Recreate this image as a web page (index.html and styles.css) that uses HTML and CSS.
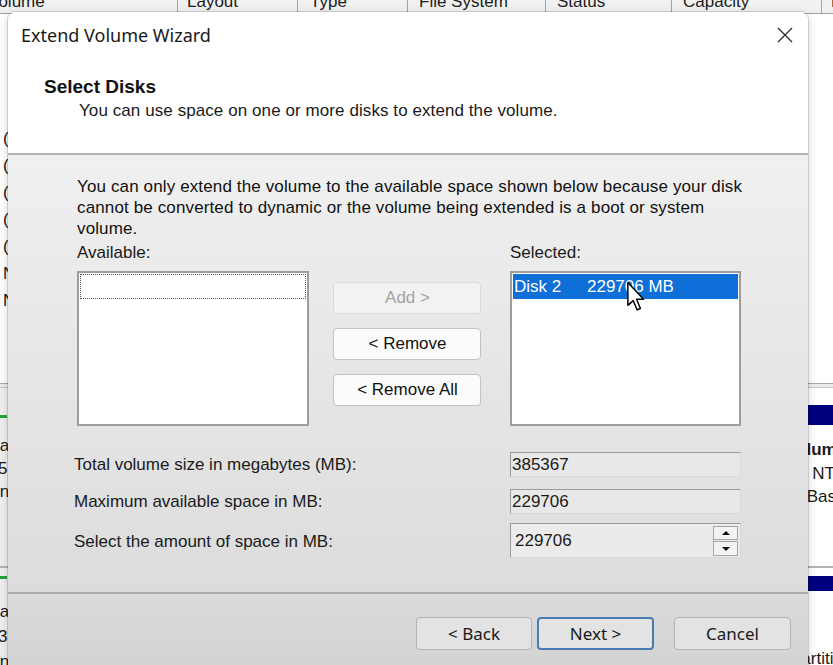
FILE: index.html
```html
<!DOCTYPE html>
<html>
<head>
<meta charset="utf-8">
<title>Extend Volume Wizard</title>
<link rel="stylesheet" href="styles.css">
</head>
<body>
<div class="screen">
  <div class="mmc">
    <div class="colhead">
      <div class="col c1"><span>Volume</span></div>
      <div class="col c2"><span>Layout</span></div>
      <div class="col c3"><span>Type</span></div>
      <div class="col c4"><span>File System</span></div>
      <div class="col c5"><span>Status</span></div>
      <div class="col c6"><span>Capacity</span></div>
      <div class="col c7"><span>Free</span></div>
    </div>
    <div class="vollist">
      <div class="vrow"></div>
      <div class="vrow"></div>
      <div class="vrow"></div>
      <div class="vrow"></div>
      <div class="vrow">(C:)</div>
      <div class="vrow">(D:)</div>
      <div class="vrow">(E:)</div>
      <div class="vrow">(F:)</div>
      <div class="vrow">(G:)</div>
      <div class="vrow">New</div>
      <div class="vrow">New</div>
    </div>
    <div class="splitter"></div>
    <div class="disk d1">
      <div class="dlabel">
        <div class="legend"></div>
        <div class="dl">Basic</div>
        <div class="dl">55.88</div>
        <div class="dl dl-o">Online</div>
      </div>
      <div class="part">
        <div class="pbar"></div>
        <div class="pt pt1">Volume</div>
        <div class="pt pt2">GB NTFS</div>
        <div class="pt pt3">(Basic</div>
      </div>
    </div>
    <div class="disk d2">
      <div class="dlabel">
        <div class="legend"></div>
        <div class="dl">Basic</div>
        <div class="dl">238.4</div>
        <div class="dl dl-o">Online</div>
      </div>
      <div class="part">
        <div class="pbar"></div>
        <div class="pt pt4">Partition</div>
      </div>
    </div>
  </div>

  <div class="dialog">
    <div class="dhead">
      <div class="titlebar">
        <span class="title">Extend Volume Wizard</span>
        <svg class="close" viewBox="0 0 16 16"><path d="M1 1L15 15M15 1L1 15"/></svg>
      </div>
      <div class="wtitle">Select Disks</div>
      <div class="wsub">You can use space on one or more disks to extend the volume.</div>
    </div>
    <div class="hsep"></div>
    <div class="dbody">
      <p class="info">You can only extend the volume to the available space shown below because your disk<br>cannot be converted to dynamic or the volume being extended is a boot or system<br>volume.</p>
      <div class="picker">
        <div class="pcol">
          <div class="plabel">Available:</div>
          <div class="listbox"><div class="focusrow"></div></div>
        </div>
        <div class="pbtns">
          <button class="btn" disabled>Add &gt;</button>
          <button class="btn">&lt; Remove</button>
          <button class="btn">&lt; Remove All</button>
        </div>
        <div class="pcol sel">
          <div class="plabel">Selected:</div>
          <div class="listbox"><div class="selrow"><span class="dname">Disk 2</span><span>229706 MB</span></div></div>
        </div>
      </div>
      <div class="sizes">
        <div class="slabel">Total volume size in megabytes (MB):</div>
        <div class="field ro">385367</div>
        <div class="slabel">Maximum available space in MB:</div>
        <div class="field ro">229706</div>
        <div class="slabel tall">Select the amount of space in MB:</div>
        <div class="field spin">
          <span class="spinval">229706</span>
          <div class="spinbtns">
            <div class="sb"><span class="tri up"></span></div>
            <div class="sb"><span class="tri dn"></span></div>
          </div>
        </div>
      </div>
    </div>
    <div class="fsep"></div>
    <div class="footer">
      <button class="fbtn back">&lt; Back</button>
      <button class="fbtn primary">Next &gt;</button>
      <button class="fbtn">Cancel</button>
    </div>
  </div>

  <svg class="cursor" viewBox="0 0 13 21" width="20" height="31"><path d="M1 1 L1 16.5 L4.6 13.3 L7.3 19.6 L9.5 18.6 L6.9 12.4 L11.6 12.4 Z" fill="#fff" stroke="#000" stroke-width="1" stroke-linejoin="round"/></svg>
</div>
</body>
</html>
```

FILE: styles.css
```css
* { box-sizing: border-box; }
html, body { margin: 0; padding: 0; }
body {
  width: 833px;
  height: 665px;
  overflow: hidden;
  background: #fff;
  font-family: "Liberation Sans", Arial, sans-serif;
}
.screen { position: relative; width: 833px; height: 665px; overflow: hidden; }

/* ---------- background Disk Management window ---------- */
.mmc {
  width: 833px;
  height: 665px;
  display: flex;
  flex-direction: column;
  background: #fff;
  color: #1b1b1b;
  font-size: 17px;
}
.colhead {
  flex: none;
  display: flex;
  height: 14px;
  overflow: hidden;
  background: #f1f1f1;
  border-bottom: 1px solid #a0a0a0;
}
.col {
  flex: none;
  height: 100%;
  border-right: 1px solid #a3a3a3;
  padding-left: 9px;
  white-space: nowrap;
  overflow: hidden;
}
.col span { display: block; margin-top: -8px; line-height: 20px; }
.c1 { width: 178px; padding-left: 0; }
.c1 span { margin-left: -12px; }
.c2 { width: 120px; }
.c3 { width: 110px; padding-left: 12px; }
.c4 { width: 138px; padding-left: 11px; }
.c5 { width: 126px; padding-left: 11px; }
.c6 { width: 150px; padding-left: 11px; }
.c7 { flex: 1; border-right: 0; }

.vollist { flex: none; height: 369px; padding-top: 3px; overflow: hidden; }
.vrow { height: 27px; line-height: 27px; padding-left: 3px; white-space: nowrap; color: #151515; }

.splitter {
  flex: none;
  height: 5px;
  border-top: 1px solid #a8a8a8;
  border-bottom: 1px solid #c6c6c6;
  background: #ececec;
}
.disk { flex: none; display: flex; background: #fff; }
.d1 { height: 178px; }
.d2 { flex: 1; border-top: 2px solid #b4b4b4; }
.dlabel { flex: none; width: 60px; background: #efefef; overflow: hidden; white-space: nowrap; }
.legend { width: 7px; height: 3px; background: #23a33c; }
.dl { text-indent: -11.5px; }
.dl-o { text-indent: -13.5px; }
.d1 .dlabel { padding-top: 27px; }
.d1 .legend { margin-bottom: 16px; }
.d1 .dl { line-height: 23px; }
.d2 .dlabel { padding-top: 8px; }
.d2 .legend { margin-bottom: 20px; }
.d2 .dl { line-height: 25px; }

.part { flex: 1; overflow: hidden; white-space: nowrap; }
.pbar { background: #00007f; }
.d1 .pbar { margin-top: 17px; height: 20px; margin-bottom: 13px; }
.d2 .pbar { margin-top: 8px; height: 15px; margin-bottom: 56px; }
.pt { line-height: 23.5px; }
.pt1 { padding-left: 726px; font-weight: bold; }
.pt2 { padding-left: 723px; }
.pt3 { padding-left: 741px; }
.pt4 { padding-left: 730px; }

/* ---------- dialog ---------- */
.dialog {
  position: absolute;
  left: 8px;
  top: 12px;
  width: 800px;
  height: 660px;
  display: flex;
  flex-direction: column;
  border-radius: 8px 8px 0 0;
  overflow: hidden;
  background: #f0f0f0;
  box-shadow: 0 0 0 1px rgba(0,0,0,0.13), 0 2px 10px rgba(0,0,0,0.18);
  color: #111;
}
.dhead { flex: none; height: 141px; background: #fff; }
.titlebar {
  height: 46px;
  display: flex;
  align-items: center;
  justify-content: space-between;
  padding: 0 15px 0 13px;
}
.title { font-family: "Noto Sans", sans-serif; font-size: 18px; color: #1a1a1a; }
.close { width: 16px; height: 16px; stroke: #2b2b2b; stroke-width: 1.3; fill: none; }
.wtitle { margin-top: 18px; padding-left: 36px; font-weight: bold; font-size: 19px; line-height: 22px; }
.wsub { margin-top: 2px; padding-left: 71px; font-size: 17px; line-height: 22px; color: #1a1a1a; letter-spacing: 0.08px; }
.hsep { flex: none; height: 2px; background: #b3b3b3; }

.dbody {
  flex: none;
  height: 437px;
  padding: 21px 0 0 69px;
  background: linear-gradient(#f0f0f0, #dcdcdc);
  font-size: 17px;
}
.info { margin: 0; line-height: 21px; white-space: nowrap; letter-spacing: 0.13px; }
.picker { display: flex; margin-top: 4px; }
.pcol { flex: none; width: 232px; }
.pcol.sel { margin-left: 29px; width: 231px; }
.plabel { line-height: 20px; margin-bottom: 8px; color: #1a1a1a; }
.listbox { height: 155px; background: #fff; border: 2px solid #9d9d9d; padding: 1px; }
.focusrow { height: 25px; border: 1px dotted #555; }
.selrow {
  height: 25px;
  background: #0d6fd7;
  color: #fff;
  display: flex;
  align-items: center;
  padding-left: 1px;
  white-space: nowrap;
}
.dname { width: 73px; }

.pbtns {
  flex: none;
  width: 148px;
  margin-left: 24px;
  padding-top: 39px;
  display: flex;
  flex-direction: column;
  gap: 14px;
}
.btn {
  height: 32px;
  margin: 0;
  padding: 0 0 0 1px;
  border: 1px solid #c2c2c2;
  border-radius: 4px;
  background: #fbfbfb;
  font-family: "Liberation Sans", Arial, sans-serif;
  font-size: 17px;
  color: #111;
}
.btn:disabled { color: #a2a2a2; border-color: #dadada; background: #f2f2f2; }

.sizes {
  display: grid;
  grid-template-columns: 436px 231px;
  grid-template-rows: 25px 37px 44px;
  margin: 26px 0 0 -3px;
  align-items: end;
}
.slabel { height: 25px; display: flex; align-items: center; color: #1a1a1a; }
.slabel.tall { height: 33px; }
.field {
  height: 25px;
  display: flex;
  align-items: center;
  border: 1px solid;
  border-color: #9c9c9c #d8d8d8 #d8d8d8 #9c9c9c;
  color: #1a1a1a;
}
.ro { background: #e8e8e8; padding-left: 1px; }
.spin { background: #ebebeb; padding-left: 4px; height: 35px; }
.spinval { flex: 1; }
.spinbtns { display: flex; flex-direction: column; gap: 1px; margin-right: 2px; align-self: flex-start; margin-top: 2px; }
.sb {
  width: 25px;
  height: 15px;
  border: 1px solid #a5a5a5;
  background: #f3f3f3;
  display: flex;
  align-items: center;
  justify-content: center;
}
.sb:first-child { height: 14px; }
.tri { width: 0; height: 0; border-left: 4px solid transparent; border-right: 4px solid transparent; }
.tri.up { border-bottom: 4px solid #111; }
.tri.dn { border-top: 4px solid #111; }

.fsep { flex: none; height: 2px; background: #ababab; }
.footer {
  flex: 1;
  display: flex;
  justify-content: flex-end;
  align-items: flex-start;
  padding: 23px 17px 0 0;
  background: linear-gradient(#dbdbdb, #d2d2d2);
}
.fbtn {
  width: 117px;
  height: 33px;
  margin: 0;
  padding: 0;
  border: 1px solid #b3b3b3;
  border-radius: 4px;
  background: #e3e3e3;
  font-family: "Noto Sans", sans-serif;
  font-size: 17px;
  color: #1a1a1a;
}
.back { width: 116px; margin-right: 5px; }
.primary { margin-right: 20px; border: 2px solid #4a7cb1; }

.cursor { position: absolute; left: 626px; top: 281px; }
```
